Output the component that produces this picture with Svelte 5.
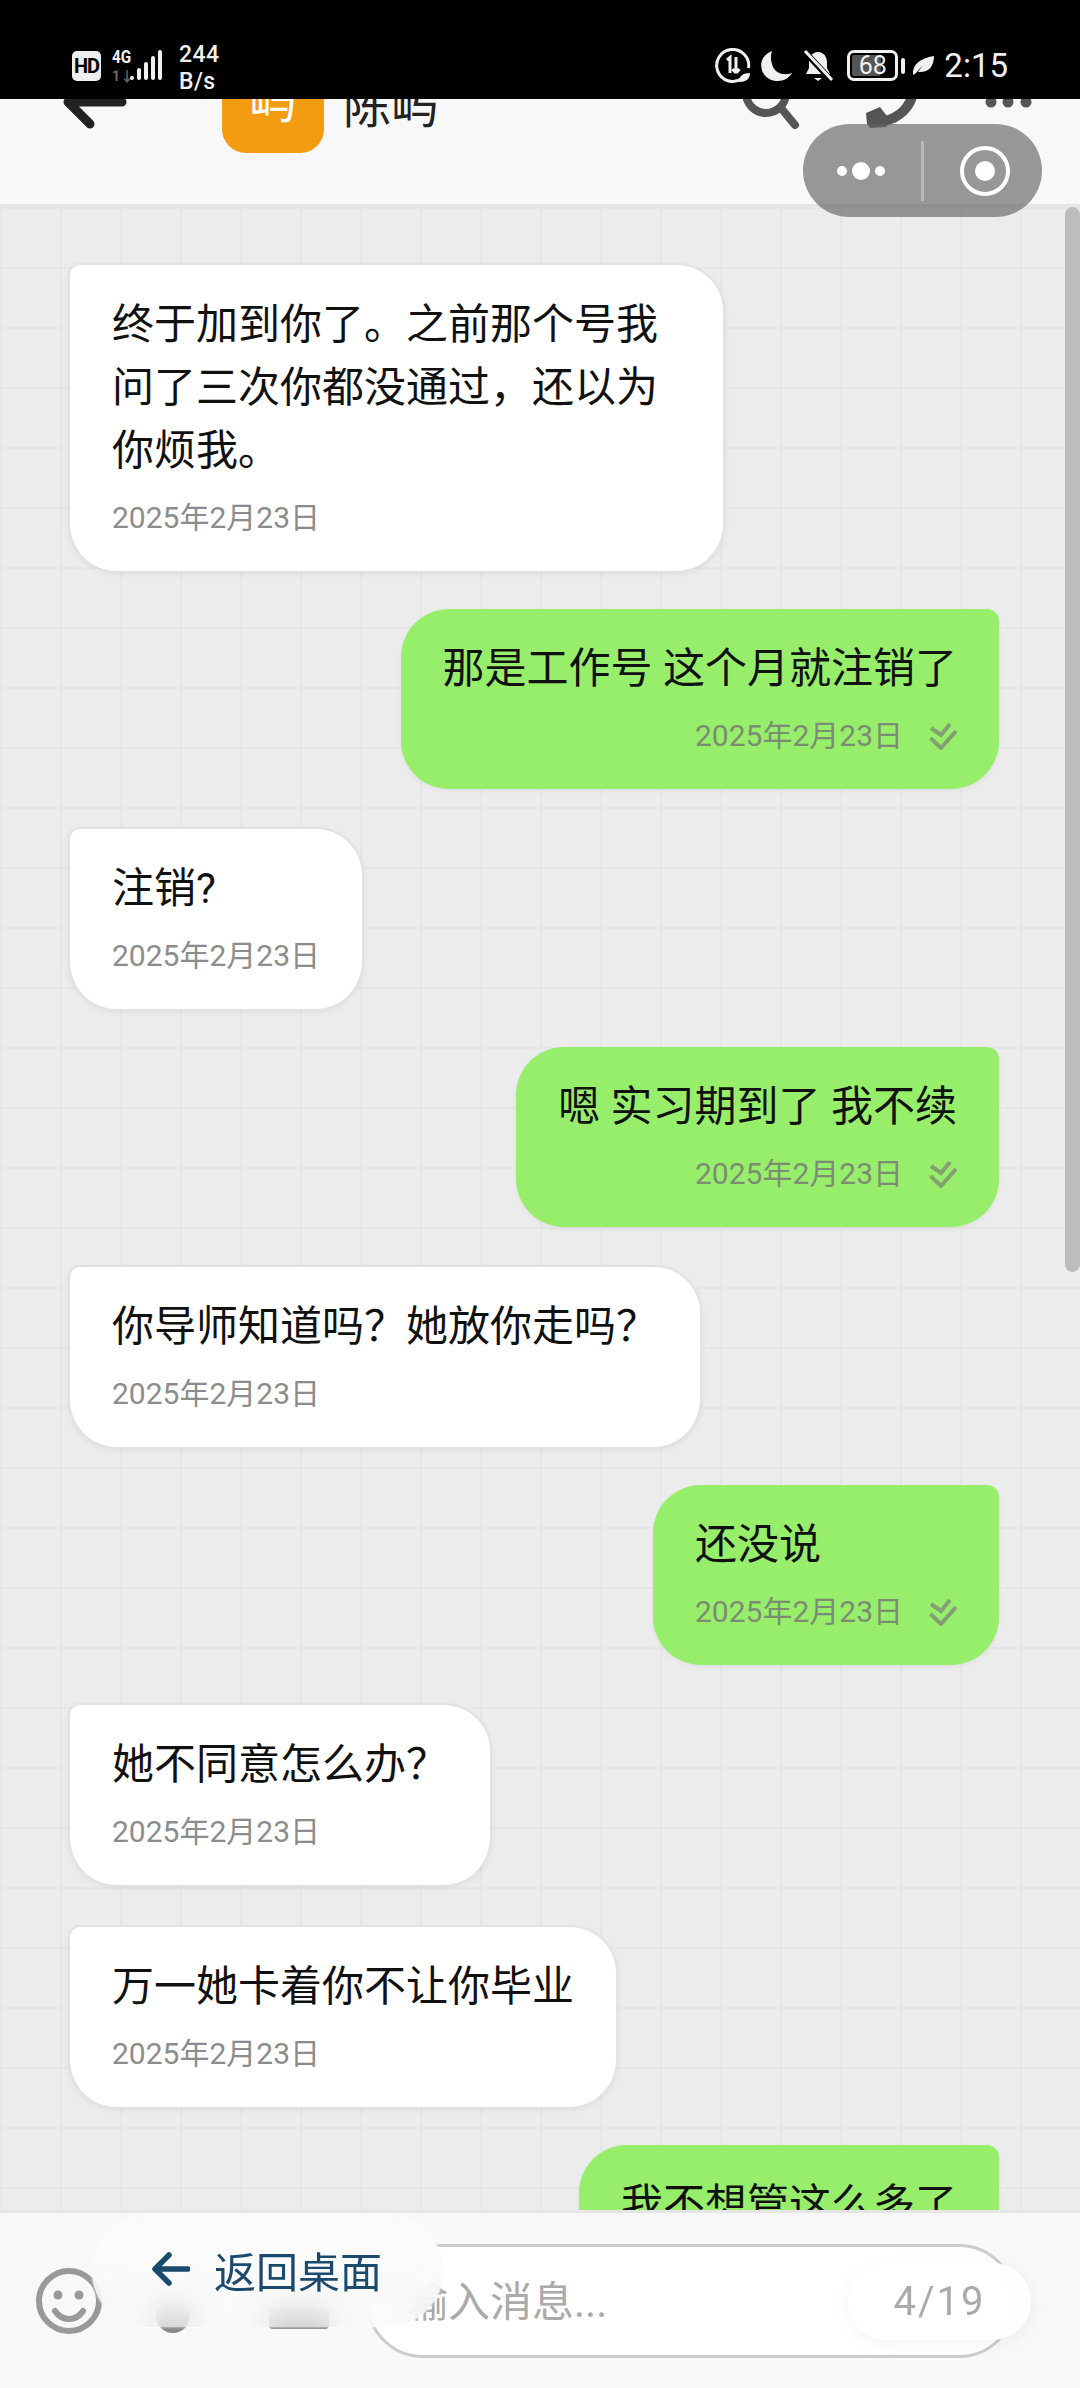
<script>
  const COMMA = '\uFF0C';
  const QM = '\uFF1F';
  const messages = [
    { side: 'left', text: `终于加到你了。之前那个号我问了三次你都没通过${COMMA}还以为你烦我。` },
    { side: 'right', text: '那是工作号 这个月就注销了' },
    { side: 'left', text: '注销?' },
    { side: 'right', text: '嗯 实习期到了 我不续' },
    { side: 'left', text: `你导师知道吗${QM}她放你走吗${QM}` },
    { side: 'right', text: '还没说' },
    { side: 'left', text: `她不同意怎么办${QM}` },
    { side: 'left', text: '万一她卡着你不让你毕业' },
    { side: 'right', text: '我不想管这么多了' }
  ];
  const bars = [4, 12, 18, 24, 30];
</script>

<div class="app" lang="zh-CN">
  <div class="status">
    <div class="st-left">
      <span class="hd">HD</span>
      <div class="net">
        <span class="g4">4G</span>
        <span class="arrows">1↓</span>
      </div>
      <div class="signal">
        {#each bars as h}
          <i class="bar" style="height:{h}px"></i>
        {/each}
      </div>
      <div class="speed"><span>244</span><span>B/s</span></div>
    </div>
    <div class="st-right">
      <svg class="s-data" viewBox="0 0 36 36" width="36" height="36">
        <path d="M27 30.5A16 16 0 1 1 33.5 20" fill="none" stroke="#f0f0f0" stroke-width="3"/>
        <path d="M12 12l3-2.500V25M21 9v16M21 25l-3.500-4M21 25l3.500-4" fill="none" stroke="#f0f0f0" stroke-width="3"/>
        <path d="M24 34c0-6 4-9 11-9 0 6-4 9-11 9z" fill="#f0f0f0"/>
      </svg>
      <svg class="s-moon" viewBox="0 0 32 32" width="32" height="32">
        <path d="M12 1C4 4 0 11 1.500 18 3 27 11 31 18 31c6 0 11-3 14-8-9 3-16 0-19-6C11 12 10 6 12 1z" fill="#f0f0f0"/>
      </svg>
      <svg class="s-bell" viewBox="0 0 30 32" width="30" height="32">
        <path d="M15 2c6 0 9 5 9 11v5l3 6H3l3-6v-5C6 7 9 2 15 2z" fill="#f0f0f0"/>
        <path d="M11 28h8l-4 3z" fill="#f0f0f0"/>
        <path d="M1 1l28 30" stroke="#000" stroke-width="6"/>
        <path d="M2 1l27 29" stroke="#f0f0f0" stroke-width="3"/>
      </svg>
      <div class="battery">
        <i class="fill"></i>
        <span>68</span>
      </div>
      <i class="tip"></i>
      <svg class="s-leaf" viewBox="0 0 22 20" width="22" height="20">
        <path d="M1 19C0 9 8 2 22 0c0 11-6 17-16 16l5-7-7 8z" fill="#f0f0f0"/>
      </svg>
      <span class="clock">2:15</span>
    </div>
  </div>

  <header class="head">
    <svg class="back" viewBox="50 52 80 100" width="80" height="100">
      <path d="M122 102H68M68 102L90 124M68 102L90 80" fill="none" stroke="#222" stroke-width="9" stroke-linecap="round" stroke-linejoin="round"/>
    </svg>
    <div class="avatar">屿</div>
    <div class="name">陈屿</div>
    <svg class="search" viewBox="735 52 70 100" width="70" height="100">
      <circle cx="766" cy="93" r="20" fill="none" stroke="#555" stroke-width="8"/>
      <path d="M781 108L795 125" stroke="#555" stroke-width="8" stroke-linecap="round"/>
    </svg>
    <svg class="phone" viewBox="860 52 60 100" width="60" height="100">
      <path d="M913 92C911 106 900 118 884 121" fill="none" stroke="#555" stroke-width="10"/>
      <path d="M866 113L880 107 890 120 886 127 870 128 867 124z" fill="#555"/>
    </svg>
    <svg class="more" viewBox="985 52 50 100" width="50" height="100">
      <circle cx="991" cy="102" r="5.500" fill="#555"/>
      <circle cx="1008" cy="102" r="5.500" fill="#555"/>
      <circle cx="1026" cy="102" r="5.500" fill="#555"/>
    </svg>
  </header>

  <main class="chat">
    {#each messages as m}
      <div class="bubble {m.side}">
        <div class="text">{m.text}</div>
        <div class="meta">
          <span class="time">2025年2月23日</span>
          {#if m.side === 'right'}
            <svg class="check" viewBox="928 723 28 27" width="28" height="27">
              <path d="M930 728L940 735 949 724M929.500 738L940 748 955 731" fill="none" stroke="#84a073" stroke-width="4"/>
            </svg>
          {/if}
        </div>
      </div>
    {/each}
    <i class="scroll"></i>
  </main>

  <footer class="foot">
    <svg class="emoji" viewBox="0 0 66 66" width="66" height="66">
      <circle cx="33" cy="33" r="30" fill="none" stroke="#999" stroke-width="6"/>
      <circle cx="22" cy="27" r="4.500" fill="#999"/>
      <circle cx="43" cy="27" r="4.500" fill="#999"/>
      <path d="M19 43c4 6 9 8 14 8s10-2 14-8" fill="none" stroke="#999" stroke-width="6" stroke-linecap="round"/>
    </svg>
    <svg class="mic" viewBox="0 0 66 66" width="66" height="66">
      <circle cx="33" cy="48" r="17" fill="#888"/>
    </svg>
    <svg class="add" viewBox="0 0 66 62" width="66" height="62">
      <rect x="3" y="36" width="60" height="23" rx="4" fill="#8c8c8c"/>
    </svg>
    <div class="input"><span class="ph">输入消息...</span></div>
  </footer>

  <div class="home">
    <svg viewBox="0 0 38 34" width="38" height="34">
      <path d="M36 17H5M17 3L3 17l14 14" fill="none" stroke="#1a4a6e" stroke-width="5.500" stroke-linecap="round" stroke-linejoin="round"/>
    </svg>
    <span>返回桌面</span>
  </div>
  <div class="count">4/19</div>

  <div class="capsule">
    <div class="dots"><i class="d"></i><i class="d big"></i><i class="d"></i></div>
    <i class="div"></i>
    <div class="target"><i></i></div>
  </div>
</div>

<style>
  :global(body) { margin: 0; background: #000; }
  .app {
    position: relative;
    width: 1080px;
    height: 2388px;
    overflow: hidden;
    display: flex;
    flex-direction: column;
    font-family: Roboto, "Noto Sans CJK SC", sans-serif;
    color: #111;
  }

  /* status bar */
  .status {
    position: absolute;
    left: 0;
    top: 0;
    width: 100%;
    height: 99px;
    background: #000;
    z-index: 5;
    display: flex;
    align-items: flex-start;
    justify-content: space-between;
    padding: 0 72px;
    box-sizing: border-box;
    color: #f0f0f0;
  }
  .st-left { display: flex; align-items: flex-start; padding-top: 41px; }
  .hd {
    margin-top: 10px;
    width: 29px;
    height: 30px;
    border-radius: 5px;
    background: #eee;
    color: #000;
    font-size: 20px;
    font-weight: 700;
    line-height: 30px;
    text-align: center;
    letter-spacing: -1px;
  }
  .net { display: flex; flex-direction: column; margin: 8px 0 0 11px; width: 18px; }
  .g4 { font-size: 18px; font-weight: 700; line-height: 16px; transform: scaleX(.85); transform-origin: left; }
  .arrows { font-size: 14px; font-weight: 700; line-height: 14px; color: #666; margin-top: 4px; }
  .signal { display: flex; align-items: flex-end; gap: 3px; height: 30px; margin: 9px 0 0 0; }
  .bar { display: block; width: 4px; background: #f0f0f0; border-radius: 2px; }
  .speed { display: flex; flex-direction: column; margin-left: 17px; font-size: 23px; font-weight: 500; line-height: 27px; margin-top: 0; letter-spacing: .4px; }

  .st-right { display: flex; align-items: center; height: 33px; margin-top: 49px; }
  .s-moon { margin-left: 9px; }
  .s-bell { margin-left: 11px; }
  .battery {
    position: relative;
    margin-left: 14px;
    width: 51px;
    height: 31px;
    border: 3px solid #f0f0f0;
    border-radius: 7px;
    box-sizing: border-box;
    text-align: center;
    font-size: 25px;
    line-height: 25px;
    overflow: hidden;
  }
  .battery span { position: relative; }
  .fill { position: absolute; left: 2px; top: 2px; bottom: 2px; width: 29px; background: #555; border-radius: 2px; }
  .tip { width: 4px; height: 16px; background: #f0f0f0; border-radius: 2px; margin-left: 3px; }
  .s-leaf { margin-left: 7px; }
  .clock { margin-left: 10px; font-size: 33px; line-height: 33px; }

  /* header */
  .head {
    flex: none;
    height: 204px;
    box-sizing: content-box;
    border-bottom: 3px solid #e5e5e5;
    background: #f8f8f8;
    display: flex;
    align-items: center;
    padding: 0 45px 0 50px;
  }
  .back, .search, .phone, .more { flex: none; }
  .avatar {
    width: 102px;
    height: 102px;
    margin-left: 92px;
    border-radius: 24px;
    background: #f39c12;
    color: #fff;
    font-size: 48px;
    line-height: 102px;
    text-align: center;
  }
  .name { margin-left: 19px; font-size: 48px; color: #222; }
  .search { margin-left: auto; }
  .phone { margin-left: 55px; }
  .more { margin-left: 65px; }

  /* chat */
  .chat {
    position: relative;
    flex: 1;
    min-height: 0;
    overflow: hidden;
    box-sizing: border-box;
    padding: 56px 81px 0 68px;
    display: flex;
    flex-direction: column;
    gap: 38px;
    background-color: #ececec;
    background-image:
      linear-gradient(#e6e6e6 2px, transparent 2px),
      linear-gradient(90deg, #e6e6e6 2px, transparent 2px);
    background-size: 60px 60px;
    background-position: 0 0;
  }
  .bubble {
    flex: none;
    box-sizing: border-box;
    padding: 28px 42px 35px;
    font-size: 42px;
    line-height: 63px;
    width: fit-content;
    max-width: 657px;
  }
  .left {
    align-self: flex-start;
    background: #fff;
    border: 2px solid #e2e2e2;
    border-bottom: 0;
    border-radius: 12px 48px 48px 48px;
    box-shadow: 0 3px 6px rgba(0, 0, 0, .06);
  }
  .left + .left { margin-top: 2px; }
  .right {
    align-self: flex-end;
    background: #97ee6b;
    border-radius: 48px 12px 48px 48px;
    box-shadow: 0 2px 5px rgba(0, 0, 0, .05);
  }
  .meta {
    display: flex;
    align-items: center;
    justify-content: flex-end;
    gap: 26px;
    height: 36px;
    margin-top: 18px;
  }
  .left .meta { justify-content: flex-start; }
  .time { font-size: 30px; line-height: 36px; color: #8c8c8c; white-space: nowrap; }
  .right .time { color: #7c8c73; }
  .check { flex: none; }
  .scroll {
    position: absolute;
    right: 0;
    top: 0;
    width: 15px;
    height: 1065px;
    border-radius: 8px;
    background: #bdbdbd;
  }

  /* footer */
  .foot {
    flex: none;
    height: 175px;
    border-top: 3px solid #e5e5e5;
    background: #f8f8f8;
    display: flex;
    align-items: center;
    padding-left: 36px;
  }
  .emoji, .mic, .add { flex: none; }
  .mic { margin-left: 38px; }
  .add { margin-left: 60px; }
  .input {
    margin-left: 34px;
    width: 650px;
    height: 114px;
    box-sizing: border-box;
    border: 3px solid #ccc;
    border-radius: 57px;
    background: #fff;
    display: flex;
    align-items: center;
    padding: 0 0 4px 37px;
  }
  .ph { font-size: 42px; color: #aaa; }

  .home {
    position: absolute;
    left: 92px;
    top: 2215px;
    width: 351px;
    height: 112px;
    box-sizing: border-box;
    border-radius: 56px;
    background: linear-gradient(rgba(250, 250, 250, .96) 30%, rgba(250, 250, 250, .8) 70%, rgba(250, 250, 250, .62));
    backdrop-filter: blur(16px);
    display: flex;
    align-items: center;
    padding: 0 0 4px 60px;
    gap: 24px;
    color: #1a4a6e;
    font-size: 42px;
    box-shadow: 0 0 3px rgba(255, 255, 255, .8);
  }
  .count {
    position: absolute;
    left: 848px;
    top: 2263px;
    width: 183px;
    height: 77px;
    border-radius: 39px;
    background: rgba(255, 255, 255, .9);
    backdrop-filter: blur(8px);
    box-shadow: 0 4px 18px rgba(0, 0, 0, .05);
    text-align: center;
    font-size: 40px;
    line-height: 77px;
    letter-spacing: 2px;
    color: #aaa;
  }

  .capsule {
    position: absolute;
    left: 803px;
    top: 124px;
    width: 239px;
    height: 93px;
    border-radius: 47px;
    background: rgba(100, 100, 100, .66);
    display: flex;
    align-items: center;
    z-index: 4;
  }
  .dots { width: 118px; display: flex; align-items: center; justify-content: flex-end; gap: 5px; padding-right: 36px; box-sizing: border-box; }
  .d { display: block; width: 10px; height: 10px; border-radius: 50%; background: #fff; }
  .d.big { width: 18px; height: 18px; }
  .div { display: block; width: 3px; height: 60px; background: rgba(255, 255, 255, .3); }
  .target {
    margin-left: 36px;
    width: 50px;
    height: 50px;
    box-sizing: border-box;
    border: 4.500px solid #fff;
    border-radius: 50%;
    display: flex;
    align-items: center;
    justify-content: center;
  }
  .target i { display: block; width: 20px; height: 20px; background: #fff; border-radius: 50%; }
</style>
